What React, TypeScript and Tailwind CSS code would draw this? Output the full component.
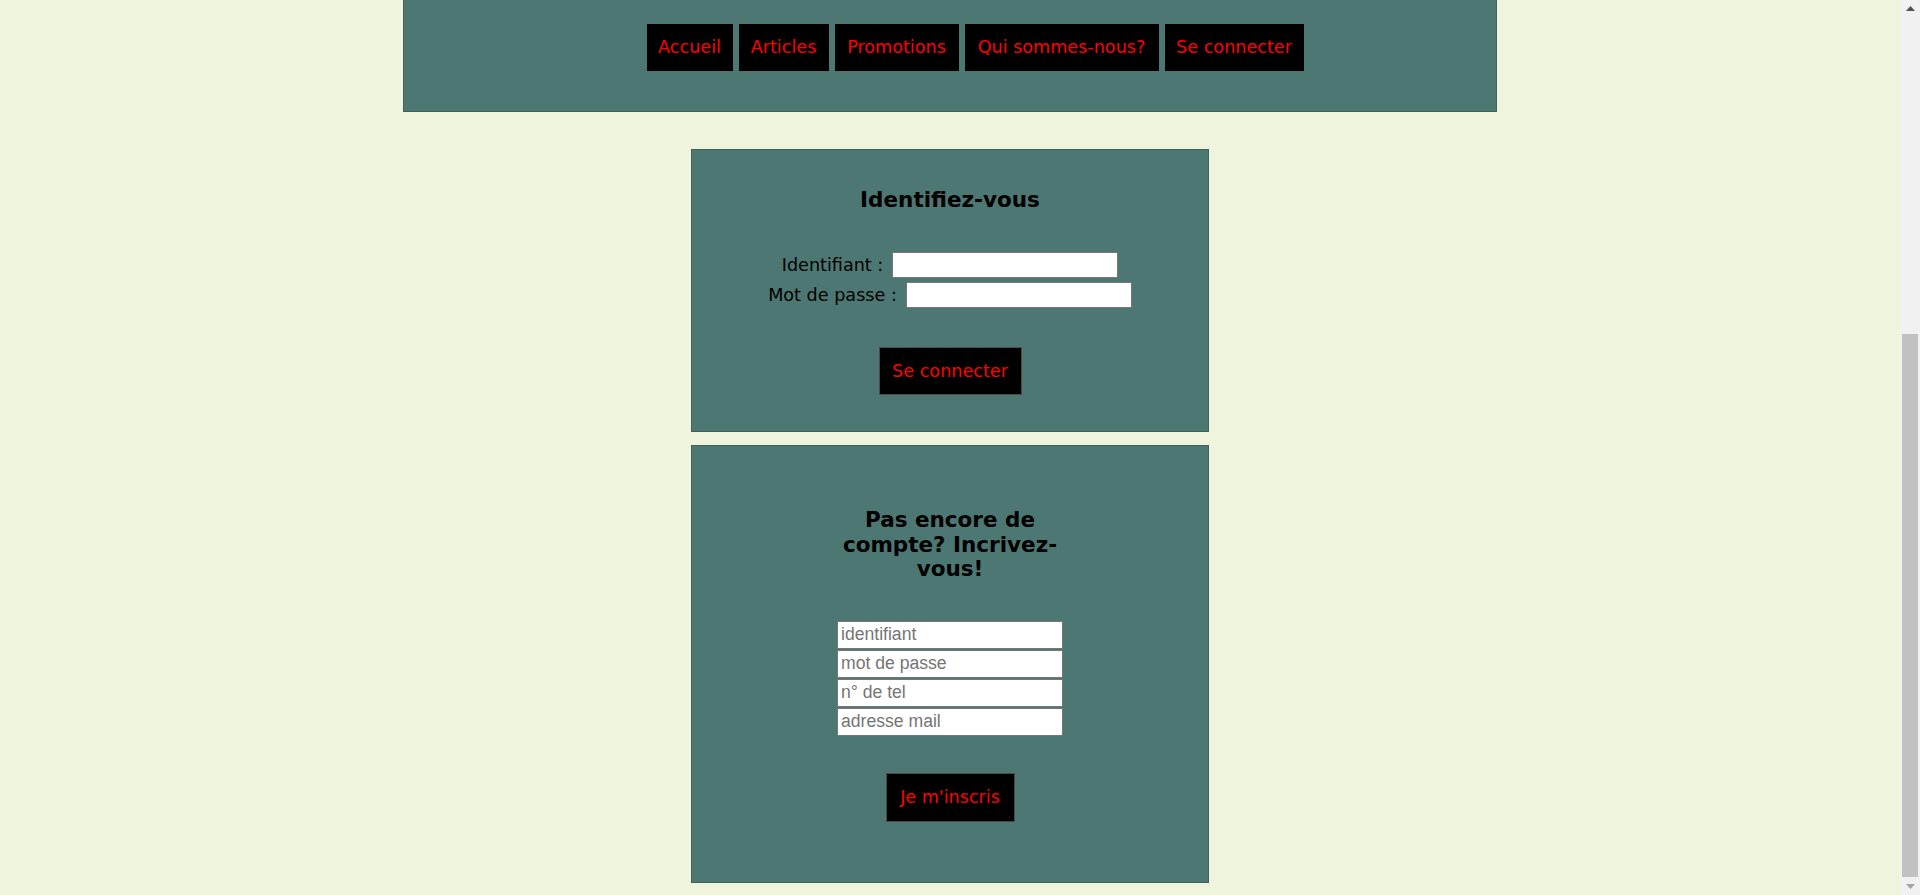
const navItems = [
  { label: 'Accueil', width: 'w-[86px]' },
  { label: 'Articles', width: 'w-[90px]' },
  { label: 'Promotions', width: 'w-[124px]' },
  { label: 'Qui sommes-nous?', width: 'w-[194px]' },
  { label: 'Se connecter', width: 'w-[139px]' },
]

const signupFields = ['identifiant', 'mot de passe', 'n° de tel', 'adresse mail']

function Scrollbar() {
  return (
    <div className="flex h-full w-[20px] flex-col bg-[#f1f1f1]">
      <div className="flex h-[17px] items-center justify-center">
        <svg width="9" height="5" viewBox="0 0 9 5">
          <polygon points="0,5 4.5,0 9,5" fill="#505050" />
        </svg>
      </div>
      <div className="flex flex-1 flex-col justify-end pb-[1px]">
        <div className="mx-[2px] h-[543px] bg-[#c1c1c1]" />
      </div>
      <div className="flex h-[17px] items-center justify-center">
        <svg width="9" height="5" viewBox="0 0 9 5">
          <polygon points="0,0 9,0 4.5,5" fill="#a3a3a3" />
        </svg>
      </div>
    </div>
  )
}

export default function App() {
  return (
    <div className="flex h-[895px] w-[1920px] overflow-hidden bg-[#eff5dd] font-['DejaVu_Sans',Verdana,sans-serif] text-[17.6px] text-black">
      <main className="flex w-[1900px] flex-col items-center">
        {/* Header / nav */}
        <header className="flex h-[112px] w-[1094px] shrink-0 justify-center border-x border-b border-[#3f625d] bg-[#4d7772] pt-[24px] pl-[50px]">
          <nav className="flex h-[47px] gap-[6px]">
            {navItems.map((item) => (
              <a
                key={item.label}
                className={`${item.width} flex h-[47px] items-center justify-center bg-black text-[#ff0000]`}
              >
                {item.label}
              </a>
            ))}
          </nav>
        </header>

        {/* Login */}
        <section className="mt-[37px] flex h-[283px] w-[518px] shrink-0 flex-col items-center border border-[#3f625d] bg-[#4d7772]">
          <h3 className="mt-[38px] text-[21.5px] leading-[24px] font-bold">Identifiez-vous</h3>
          <div className="mt-[40px] flex flex-col gap-[4px]">
            <label className="flex h-[26px] items-center justify-center gap-[9px]">
              <span>Identifiant :</span>
              <input
                type="text"
                className="h-[26px] w-[226px] border border-[#767676] bg-white px-[3px] font-['Liberation_Sans',Arial,sans-serif] text-[17.6px] outline-none"
              />
            </label>
            <label className="flex h-[26px] items-center justify-center gap-[9px]">
              <span>Mot de passe :</span>
              <input
                type="password"
                className="h-[26px] w-[226px] border border-[#767676] bg-white px-[3px] font-['Liberation_Sans',Arial,sans-serif] text-[17.6px] outline-none"
              />
            </label>
          </div>
          <button className="mt-[39px] flex h-[48px] w-[143px] items-center justify-center border border-[#4a4a4a] bg-black text-[#ff0000]">
            Se connecter
          </button>
        </section>

        {/* Sign up */}
        <section className="mt-[13px] flex h-[438px] w-[518px] shrink-0 flex-col items-center border border-[#3f625d] bg-[#4d7772]">
          <h3 className="mt-[62px] w-[226px] text-center text-[21.5px] leading-[24.5px] font-bold">
            Pas encore de compte? Incrivez-vous!
          </h3>
          <div className="mt-[39px] flex flex-col gap-[1px]">
            {signupFields.map((f) => (
              <input
                key={f}
                type="text"
                placeholder={f}
                className="h-[28px] w-[226px] border border-[#767676] bg-white px-[3px] font-['Liberation_Sans',Arial,sans-serif] text-[17.6px] outline-none placeholder:text-[#757575]"
              />
            ))}
          </div>
          <button className="mt-[37px] flex h-[49px] w-[129px] items-center justify-center border border-[#4a4a4a] bg-black text-[#ff0000]">
            Je m'inscris
          </button>
        </section>
      </main>
      <Scrollbar />
    </div>
  )
}
